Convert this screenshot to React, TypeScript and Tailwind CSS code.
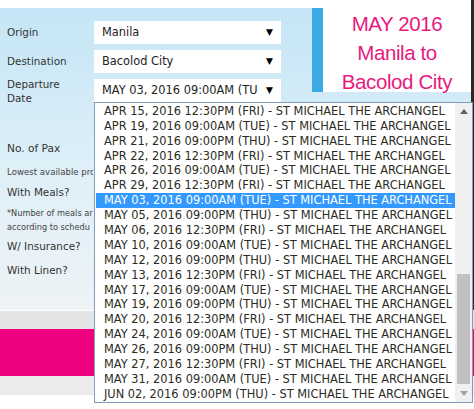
import React from "react";

const trips = [
  "APR 15, 2016 12:30PM (FRI) - ST MICHAEL THE ARCHANGEL",
  "APR 19, 2016 09:00AM (TUE) - ST MICHAEL THE ARCHANGEL",
  "APR 21, 2016 09:00PM (THU) - ST MICHAEL THE ARCHANGEL",
  "APR 22, 2016 12:30PM (FRI) - ST MICHAEL THE ARCHANGEL",
  "APR 26, 2016 09:00AM (TUE) - ST MICHAEL THE ARCHANGEL",
  "APR 29, 2016 12:30PM (FRI) - ST MICHAEL THE ARCHANGEL",
  "MAY 03, 2016 09:00AM (TUE) - ST MICHAEL THE ARCHANGEL",
  "MAY 05, 2016 09:00PM (THU) - ST MICHAEL THE ARCHANGEL",
  "MAY 06, 2016 12:30PM (FRI) - ST MICHAEL THE ARCHANGEL",
  "MAY 10, 2016 09:00AM (TUE) - ST MICHAEL THE ARCHANGEL",
  "MAY 12, 2016 09:00PM (THU) - ST MICHAEL THE ARCHANGEL",
  "MAY 13, 2016 12:30PM (FRI) - ST MICHAEL THE ARCHANGEL",
  "MAY 17, 2016 09:00AM (TUE) - ST MICHAEL THE ARCHANGEL",
  "MAY 19, 2016 09:00PM (THU) - ST MICHAEL THE ARCHANGEL",
  "MAY 20, 2016 12:30PM (FRI) - ST MICHAEL THE ARCHANGEL",
  "MAY 24, 2016 09:00AM (TUE) - ST MICHAEL THE ARCHANGEL",
  "MAY 26, 2016 09:00PM (THU) - ST MICHAEL THE ARCHANGEL",
  "MAY 27, 2016 12:30PM (FRI) - ST MICHAEL THE ARCHANGEL",
  "MAY 31, 2016 09:00AM (TUE) - ST MICHAEL THE ARCHANGEL",
  "JUN 02, 2016 09:00PM (THU) - ST MICHAEL THE ARCHANGEL",
];

const selected = 6;

// fake native <select> box
function SelectBox({ value }: { value: string }) {
  return (
    <div className="flex-1 h-full bg-white flex items-center pl-[8px] pr-[8px] text-[11.4px] text-[#222] overflow-hidden">
      <span className="flex-1 whitespace-nowrap overflow-hidden">{value}</span>
      <span className="text-[9px] text-black ml-[4px]">▼</span>
    </div>
  );
}

export default function App() {
  return (
    <div
      className="relative w-[474px] h-[409px] overflow-hidden bg-white"
      style={{ fontFamily: '"DejaVu Sans", Verdana, sans-serif' }}
    >
      <div className="h-[8px] bg-white" />

      {/* sky area with the form */}
      <div className="flex h-[302px] bg-gradient-to-b from-[#c4e5f6] via-[#ddeff8] to-[#eef3f6]">
        <div className="w-[312px] flex flex-col pt-[13px] pl-[7px] pr-[31px] text-[#333]">
          <div className="flex h-[23px] items-center">
            <span className="w-[87px] text-[10.4px]">Origin</span>
            <SelectBox value="Manila" />
          </div>
          <div className="flex h-[23px] items-center mt-[6px]">
            <span className="w-[87px] text-[10.4px]">Destination</span>
            <SelectBox value="Bacolod City" />
          </div>
          <div className="flex h-[23px] items-center mt-[6px]">
            <span className="w-[87px] text-[10.4px] leading-[14px]">
              Departure
              <br />
              Date
            </span>
            <SelectBox value="MAY 03, 2016 09:00AM (TU" />
          </div>

          <div className="mt-[37px] h-[20px] flex items-center text-[10.6px]">No. of Pax</div>
          <div className="mt-[7px] w-[86px] overflow-hidden h-[12px] leading-[12px] text-[8.6px] text-[#444] whitespace-nowrap">
            Lowest available pro
          </div>
          <div className="mt-[7px] h-[16px] flex items-center text-[10.4px]">With Meals?</div>
          <div className="mt-[5px] w-[86px] overflow-hidden text-[8.2px] leading-[14px] text-[#444] whitespace-nowrap">
            *Number of meals ar
            <br />
            according to schedu
          </div>
          <div className="mt-[5px] h-[16px] flex items-center text-[10.4px]">W/ Insurance?</div>
          <div className="mt-[8px] h-[16px] flex items-center text-[10.4px]">With Linen?</div>
        </div>

        <div className="flex-1 flex">
          <div className="flex-1 flex flex-col">
            <div className="flex h-[92px] -mt-[8px] pt-[8px] bg-white">
              <div className="w-[11px] bg-[#3aa9e4]" />
              <div
                className="flex-1 flex flex-col items-center pt-[1px] text-[#e8197f] text-[20.5px] leading-[29px] tracking-[-0.4px]"
                style={{ fontFamily: '"Liberation Sans", Arial, sans-serif' }}
              >
                <span>MAY 2016</span>
                <span>Manila to</span>
                <span>Bacolod City</span>
              </div>
            </div>
          </div>
          <div className="w-[3px] -mt-[8px] bg-[#2a2a2a]" />
        </div>
      </div>

      <div className="h-[1px] bg-white" />
      <div className="h-[18px] bg-[#e2e4e5]" />
      <div className="h-[47px] bg-[#ef007f]" />
      <div className="h-[19px] bg-[#ebebeb]" />

      {/* open dropdown list */}
      <div className="absolute left-[94px] top-[102px] w-[379px] h-[301px] bg-white border border-[#7f9db9] flex">
        <div className="flex-1 flex flex-col pl-[1px] pt-[1px]">
          {trips.map((t, i) => (
            <div
              key={t}
              className={
                i === selected
                  ? "h-[14.9px] flex items-center pl-[8px] text-[11.4px] whitespace-nowrap bg-[#3399ff] text-white"
                  : "h-[14.9px] flex items-center pl-[8px] text-[11.4px] whitespace-nowrap text-[#2b2b22]"
              }
            >
              {t}
            </div>
          ))}
        </div>
        <div className="w-[17px] bg-[#f0f0f0] flex flex-col items-center">
          <div className="h-[17px] flex items-center justify-center">
            <svg width="8" height="5" viewBox="0 0 8 5">
              <path d="M4 0 L8 5 L0 5 Z" fill="#606060" />
            </svg>
          </div>
          <div className="flex-1 w-full flex flex-col justify-end px-[2px]">
            <div className="h-[110px] bg-[#c1c1c1] mb-[1px]" />
          </div>
          <div className="h-[17px] flex items-center justify-center">
            <svg width="8" height="5" viewBox="0 0 8 5">
              <path d="M0 0 L8 0 L4 5 Z" fill="#a0a0a0" />
            </svg>
          </div>
        </div>
      </div>
    </div>
  );
}
